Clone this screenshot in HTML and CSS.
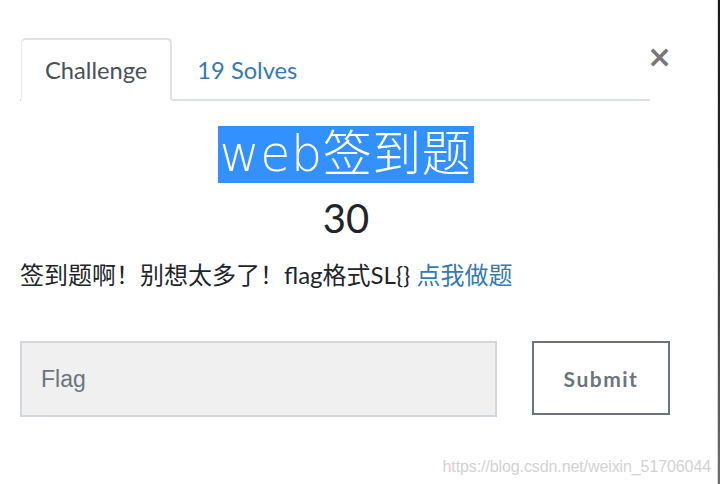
FILE: index.html
```html
<!DOCTYPE html>
<html lang="zh">
<head>
<meta charset="utf-8">
<title>web签到题</title>
<link rel="stylesheet" href="styles.css">
</head>
<body>
<div class="modal">
  <div class="modal-body">
    <div class="header">
      <nav class="tabs">
        <a class="tab active">Challenge</a>
        <a class="tab">19 Solves</a>
      </nav>
      <button class="close">×</button>
    </div>
    <h3 class="title"><span class="sel">web签到题</span></h3>
    <h4 class="value">30</h4>
    <p class="desc">签到题啊！别想太多了！flag格式SL{} <a class="link">点我做题</a></p>
    <form class="flag-row">
      <input class="flag-input" type="text" placeholder="Flag">
      <button class="submit" type="button">Submit</button>
    </form>
  </div>
  <div class="watermark">https://blog.csdn.net/weixin_51706044</div>
</div>
</body>
</html>
```
FILE: styles.css
```css
html, body {
  margin: 0;
  padding: 0;
  background: #fff;
}
body {
  width: 721px;
  height: 484px;
  overflow: hidden;
  font-family: Lato, "Noto Sans CJK SC", sans-serif;
  color: #212529;
}
.modal {
  position: relative;
  width: 718px;
  height: 484px;
  box-sizing: border-box;
  border-right: 1px solid #d8d8d8;
  background: #fff;
}
.modal::after {
  content: "";
  position: absolute;
  top: 0;
  right: -3px;
  width: 2px;
  height: 100%;
  background: linear-gradient(#1a1a1a, #2a2a2a 40%, #6e6e6e);
}
.modal-body {
  width: 652px;
  padding: 38px 0 0 20px;
}
.header {
  display: flex;
  align-items: flex-start;
}
.tabs {
  display: flex;
  width: 630px;
  border-bottom: 2px solid #dee2e6;
}
.tab {
  display: block;
  font-size: 23.7px;
  line-height: 30px;
  padding: 16px 23px 15px 23px;
  color: #337ab7;
  border: 1px solid transparent;
  border-top-left-radius: 5px;
  border-top-right-radius: 5px;
  margin-bottom: -2px;
  margin-left: 1px;
}
.tab.active {
  color: #495057;
  background: #fff;
  border-color: #dee2e6 #dee2e6 #fff #e9ecef;
  border-width: 2px 2px 2px 1px;
  padding-top: 15px;
  padding-bottom: 14px;
}
.close {
  margin: 8px 0 0 -3px;
  padding: 0;
  border: 0;
  background: none;
  font-family: "DejaVu Sans", sans-serif;
  font-size: 30px;
  line-height: 22px;
  font-weight: bold;
  color: #777;
  width: 20px;
}
.title {
  margin: 25px 0 0 0;
  text-align: center;
  font-weight: normal;
  line-height: 57px;
  height: 57px;
}
.sel {
  display: inline-block;
  background: #3390ff;
  color: #fff;
  font-family: "DejaVu Sans", "Noto Sans CJK SC", sans-serif;
  font-weight: 200;
  font-size: 49px;
  line-height: 57px;
  height: 57px;
  padding: 0 3px 0 2px;
  letter-spacing: 0.6px;
}
.value {
  margin: 11px 0 0 0;
  text-align: center;
  font-weight: normal;
  font-size: 40px;
  line-height: 48px;
}
.desc {
  margin: 16px 0 0 0;
  font-size: 24px;
  line-height: 34px;
  color: #212529;
}
.link {
  color: #337ab7;
}
.flag-row {
  display: flex;
  align-items: flex-start;
  gap: 35px;
  margin-top: 49px;
}
.flag-input {
  box-sizing: border-box;
  width: 477px;
  height: 76px;
  margin: 0;
  padding: 0 0 0 19px;
  border: 2px solid #d3d8de;
  background: #f0f0f0;
  font-family: "Liberation Sans", Arial, sans-serif;
  font-size: 23px;
  color: #495057;
  outline: none;
}
.flag-input::placeholder {
  color: #6c757d;
}
.submit {
  box-sizing: border-box;
  width: 138px;
  height: 74px;
  margin: 0;
  padding: 0;
  border: 2px solid #6c757d;
  background: #fff;
  font-family: Lato, sans-serif;
  font-weight: bold;
  font-size: 21px;
  letter-spacing: 1.5px;
  color: #6c757d;
}
.watermark {
  position: absolute;
  right: 6px;
  bottom: 8px;
  font-family: "Liberation Sans", Arial, sans-serif;
  font-size: 16px;
  color: #d2d2d2;
  letter-spacing: -0.1px;
}
```
